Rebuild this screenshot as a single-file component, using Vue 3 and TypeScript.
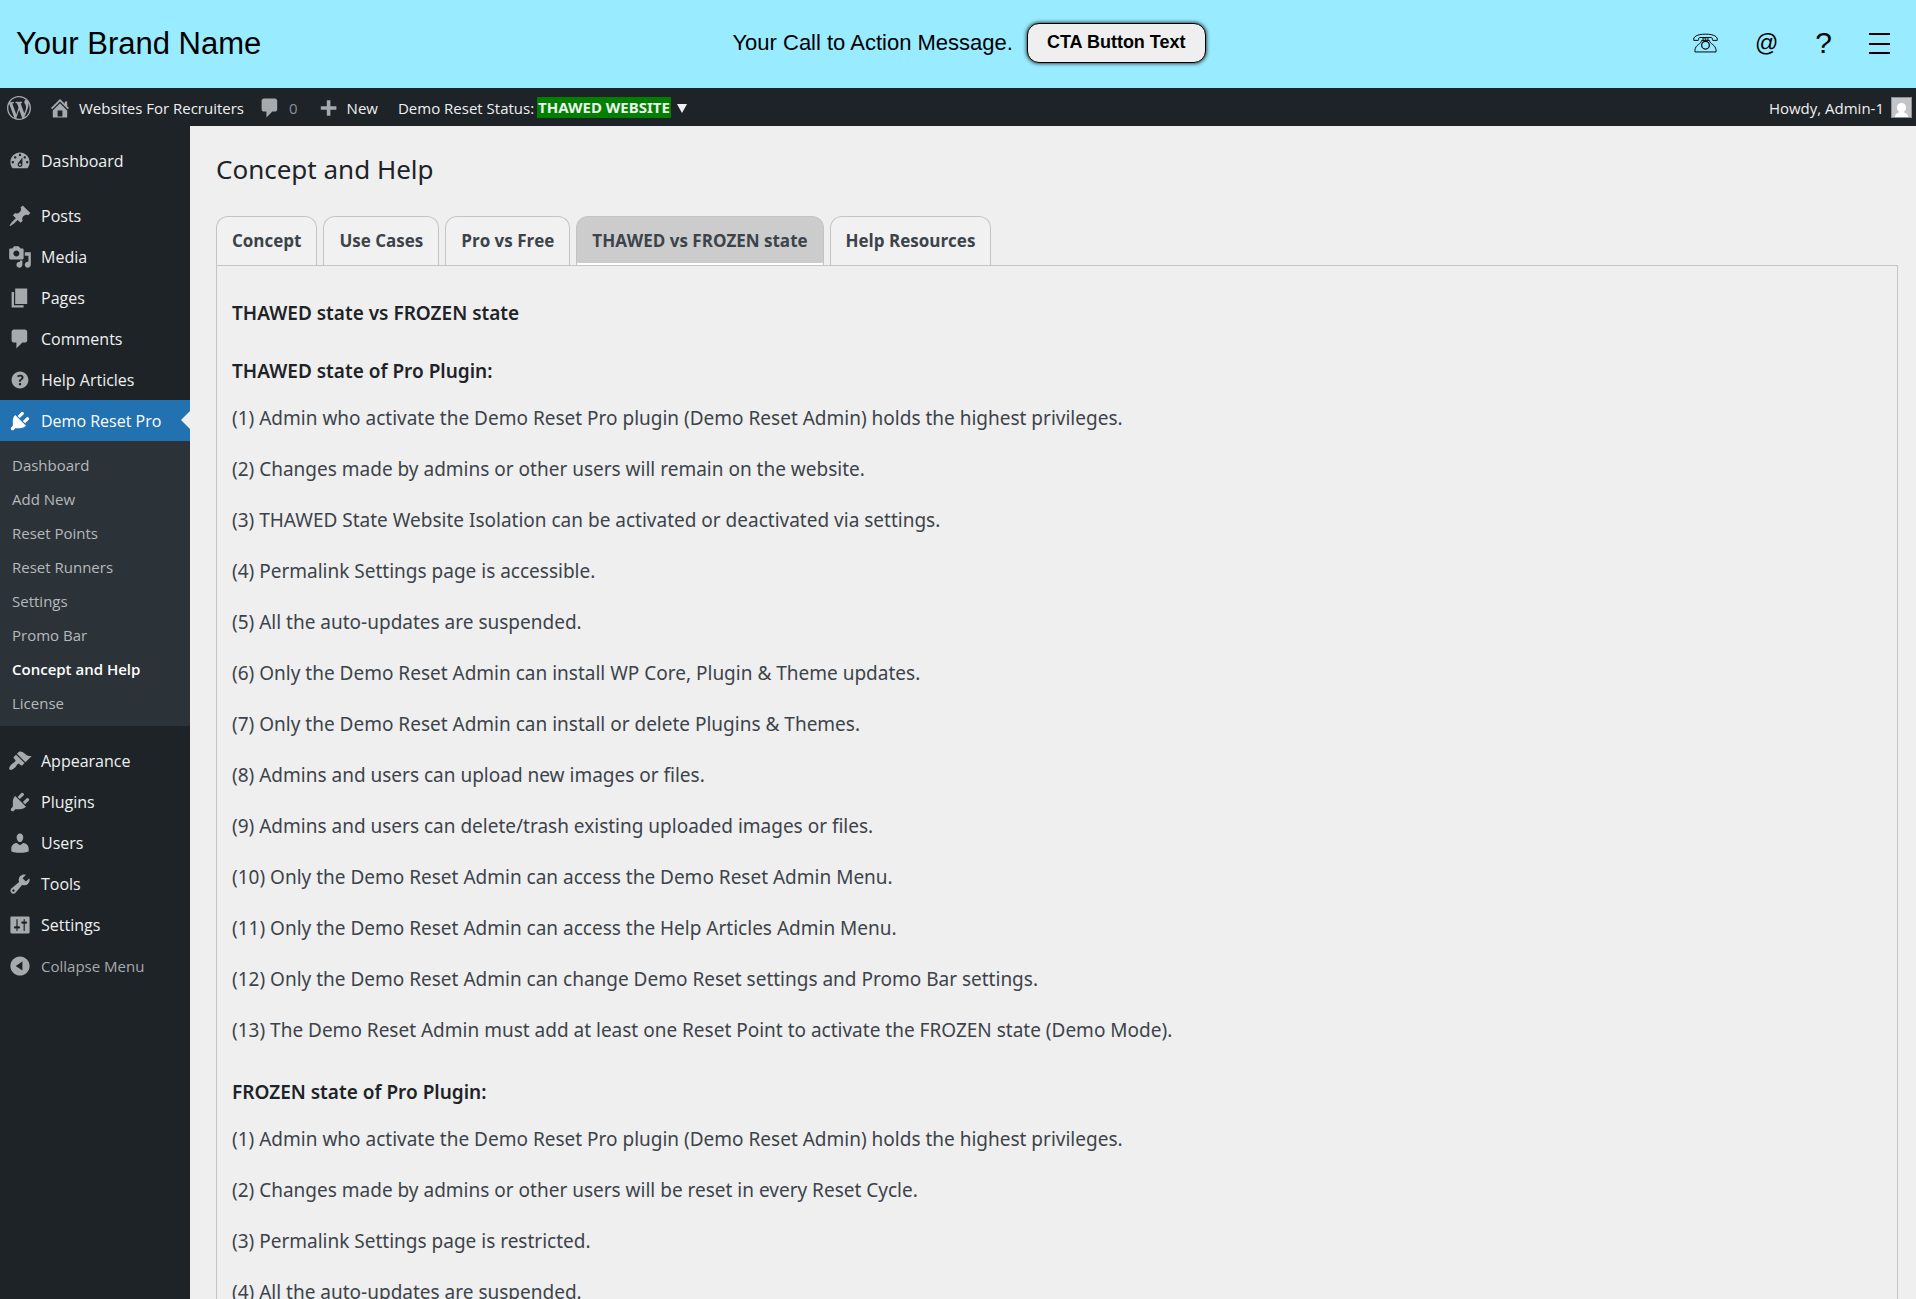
<script setup lang="ts">
import { ref } from 'vue'

interface MenuItem {
  label: string
  icon: string
  current?: boolean
  children?: string[]
}

const icons: Record<string, string> = {
  wordpress:
    'M20 10c0-5.51-4.49-10-10-10C4.48 0 0 4.49 0 10c0 5.52 4.48 10 10 10 5.51 0 10-4.48 10-10zM7.78 15.37L4.37 6.22c.55-.02 1.17-.08 1.17-.08.5-.06.44-1.13-.06-1.11 0 0-1.45.11-2.37.11-.18 0-.37 0-.58-.01C4.12 2.69 6.87 1.11 10 1.11c2.33 0 4.45.87 6.05 2.34-.68-.11-1.65.39-1.65 1.58 0 .74.45 1.36.9 2.1.35.61.55 1.36.55 2.46 0 1.49-1.4 5-1.4 5l-3.03-8.37c.54-.02.82-.17.82-.17.5-.05.44-1.25-.06-1.22 0 0-1.44.12-2.38.12-.87 0-2.33-.12-2.33-.12-.5-.03-.56 1.2-.06 1.22l.92.08 1.26 3.41zM17.41 10c.24-.64.74-1.87.43-4.25.7 1.29 1.05 2.71 1.05 4.25 0 3.29-1.73 6.24-4.4 7.78.97-2.59 1.94-5.2 2.92-7.78zM6.1 18.09C3.12 16.65 1.11 13.53 1.11 10c0-1.3.23-2.48.72-3.59C3.25 10.3 4.67 14.2 6.1 18.09zm4.03-6.63l2.58 6.98c-.86.29-1.76.45-2.71.45-.79 0-1.57-.11-2.29-.33.81-2.38 1.62-4.74 2.42-7.1z',
  home: 'M16 8.5l1.53 1.53-1.06 1.06L10 4.6l-6.47 6.49-1.06-1.06L10 2.5l4 4v-2h2v4zm-6-2.46l6 5.99V18H4v-5.97zM12 17v-5H8v5h4z',
  plus: 'M17 7v3h-5v5H9v-5H4V7h5V2h3v5h5z',
  dashboard:
    'M3.76 16h12.48c1.1-1.37 1.76-3.11 1.76-5 0-4.42-3.58-8-8-8s-8 3.58-8 8c0 1.89.66 3.63 1.76 5zM10 4c.55 0 1 .45 1 1s-.45 1-1 1-1-.45-1-1 .45-1 1-1zM6 6c.55 0 1 .45 1 1s-.45 1-1 1-1-.45-1-1 .45-1 1-1zm8 0c.55 0 1 .45 1 1s-.45 1-1 1-1-.45-1-1 .45-1 1-1zm-5.37 5.55L12 7v6c0 1.1-.9 2-2 2s-2-.9-2-2c0-.57.24-1.08.63-1.45zM4 10c.55 0 1 .45 1 1s-.45 1-1 1-1-.45-1-1 .45-1 1-1zm12 0c.55 0 1 .45 1 1s-.45 1-1 1-1-.45-1-1 .45-1 1-1zm-5 3c0-.55-.45-1-1-1s-1 .45-1 1 .45 1 1 1 1-.45 1-1z',
  post: 'M10.44 3.02l1.82-1.82 6.36 6.35-1.83 1.82c-1.05-.68-2.48-.57-3.41.36l-.75.75c-.92.93-1.04 2.35-.35 3.41l-1.83 1.82-2.41-2.41-2.8 2.79c-.42.42-3.38 2.71-3.8 2.29s1.86-3.39 2.28-3.81l2.79-2.79L4.1 9.36l1.83-1.82c1.05.69 2.48.57 3.4-.36l.75-.75c.93-.92 1.05-2.35.36-3.41z',
  media:
    'M13 11V4c0-.55-.45-1-1-1h-1.67L9 1H5L3.67 3H2c-.55 0-1 .45-1 1v7c0 .55.45 1 1 1h10c.55 0 1-.45 1-1zM7 4.5c1.38 0 2.5 1.12 2.5 2.5S8.38 9.5 7 9.5 4.5 8.38 4.5 7 5.62 4.5 7 4.5zM14 6h5v10.5c0 1.38-1.12 2.5-2.5 2.5S14 17.88 14 16.5s1.12-2.5 2.5-2.5c.17 0 .34.02.5.05V9h-3V6zm-4 8.05V13h2v3.5c0 1.38-1.12 2.5-2.5 2.5S7 17.88 7 16.5 8.12 14 9.5 14c.17 0 .34.02.5.05z',
  page: 'M6 15V2h10v13H6zm-1 1h8v2H3V5h2v11z',
  comments: 'M5 2h9c1.1 0 2 .9 2 2v7c0 1.1-.9 2-2 2h-2l-5 5v-5H5c-1.1 0-2-.9-2-2V4c0-1.1.9-2 2-2z',
  help: 'M17 10c0-3.87-3.14-7-7-7-3.87 0-7 3.13-7 7s3.13 7 7 7c3.86 0 7-3.13 7-7zm-6.3 1.48H9.14v-.43c0-.38.08-.7.24-.98s.46-.57.88-.89c.41-.29.68-.53.81-.71.14-.18.2-.39.2-.62 0-.25-.09-.44-.28-.58-.19-.13-.45-.19-.79-.19-.58 0-1.25.19-2 .57l-.64-1.28c.87-.49 1.8-.74 2.77-.74.81 0 1.45.2 1.92.58.48.39.71.91.71 1.55 0 .43-.09.8-.29 1.11-.19.32-.57.67-1.11 1.06-.38.28-.61.49-.71.63-.1.15-.15.34-.15.57v.35zm-1.47 2.74c-.18-.17-.27-.42-.27-.73 0-.33.08-.58.26-.75s.43-.25.77-.25c.32 0 .57.09.75.26s.27.42.27.74c0 .3-.09.55-.27.72-.18.18-.43.27-.75.27-.33 0-.58-.09-.76-.26z',
  plugins:
    'M13.11 4.36L9.87 7.6 8 5.73l3.24-3.24c.35-.34 1.05-.2 1.56.32.52.51.66 1.21.31 1.55zm-8 1.77l.91-1.12 9.01 9.01-1.19.84c-.71.71-2.63 1.16-3.82 1.16H6.14L4.9 17.26c-.59.59-1.54.59-2.12 0-.59-.58-.59-1.53 0-2.12l1.24-1.24v-3.88c0-1.13.4-3.19 1.09-3.89zm7.26 3.97l3.24-3.24c.34-.35 1.04-.21 1.55.31.52.51.66 1.21.31 1.55l-3.24 3.25z',
  appearance:
    'M14.48 11.06L7.41 3.99l1.5-1.5c.5-.56 2.3-.47 3.51.32 1.21.8 1.43 1.28 2.91 2.1 1.18.64 2.45 1.26 4.45.85zm-.71.71L6.7 4.7 4.93 6.47c-.39.39-.39 1.02 0 1.41l1.06 1.06c.39.39.39 1.03 0 1.42-.6.6-1.43 1.11-2.21 1.69-.35.26-.7.53-1.01.84C1.43 14.23.4 16.08 1.4 17.07c.99 1 2.84-.03 4.18-1.36.31-.31.58-.66.85-1.02.57-.78 1.08-1.61 1.69-2.21.39-.39 1.02-.39 1.41 0l1.06 1.06c.39.39 1.02.39 1.41 0z',
  users:
    'M10 9.25c-2.27 0-2.73-3.44-2.73-3.44C7 4.02 7.82 2 9.97 2c2.16 0 2.98 2.02 2.71 3.81 0 0-.41 3.44-2.68 3.44zm0 2.57L12.72 10c2.39 0 4.52 2.33 4.52 4.53v2.49s-3.65 1.13-7.24 1.13c-3.65 0-7.24-1.13-7.24-1.13v-2.49c0-2.25 1.94-4.48 4.47-4.48z',
  tools:
    'M16.68 9.77c-1.34 1.34-3.3 1.67-4.95.99l-5.41 6.52c-.99.99-2.59.99-3.58 0s-.99-2.59 0-3.57l6.52-5.42c-.68-1.65-.35-3.61.99-4.95 1.28-1.28 3.12-1.62 4.72-1.06l-2.89 2.89 2.82 2.82 2.86-2.87c.53 1.58.18 3.39-1.08 4.65zM3.81 16.21c.4.39 1.04.39 1.43 0 .4-.4.4-1.04 0-1.43-.39-.4-1.03-.4-1.43 0-.39.39-.39 1.03 0 1.43z',
  settings:
    'M18 16V4c0-.55-.45-1-1-1H3c-.55 0-1 .45-1 1v12c0 .55.45 1 1 1h14c.55 0 1-.45 1-1zM8 11h1c.55 0 1 .45 1 1s-.45 1-1 1H8v1.5c0 .28-.22.5-.5.5s-.5-.22-.5-.5V13H6c-.55 0-1-.45-1-1s.45-1 1-1h1V5.5c0-.28.22-.5.5-.5s.5.22.5.5V11zm5-2h-1c-.55 0-1-.45-1-1s.45-1 1-1h1V5.5c0-.28.22-.5.5-.5s.5.22.5.5V7h1c.55 0 1 .45 1 1s-.45 1-1 1h-1v5.5c0 .28-.22.5-.5.5s-.5-.22-.5-.5V9z',
  collapse: 'M10 2c4.42 0 8 3.58 8 8s-3.58 8-8 8-8-3.58-8-8 3.58-8 8-8zm2 4.2L6.4 10l5.6 3.8z',
}

const menuGroups: MenuItem[][] = [
  [{ label: 'Dashboard', icon: 'dashboard' }],
  [
    { label: 'Posts', icon: 'post' },
    { label: 'Media', icon: 'media' },
    { label: 'Pages', icon: 'page' },
    { label: 'Comments', icon: 'comments' },
    { label: 'Help Articles', icon: 'help' },
    {
      label: 'Demo Reset Pro',
      icon: 'plugins',
      current: true,
      children: [
        'Dashboard',
        'Add New',
        'Reset Points',
        'Reset Runners',
        'Settings',
        'Promo Bar',
        'Concept and Help',
        'License',
      ],
    },
  ],
  [
    { label: 'Appearance', icon: 'appearance' },
    { label: 'Plugins', icon: 'plugins' },
    { label: 'Users', icon: 'users' },
    { label: 'Tools', icon: 'tools' },
    { label: 'Settings', icon: 'settings' },
  ],
]

const currentPage = 'Concept and Help'

const tabs = ['Concept', 'Use Cases', 'Pro vs Free', 'THAWED vs FROZEN state', 'Help Resources']
const activeTab = ref('THAWED vs FROZEN state')

const thawed = [
  'Admin who activate the Demo Reset Pro plugin (Demo Reset Admin) holds the highest privileges.',
  'Changes made by admins or other users will remain on the website.',
  'THAWED State Website Isolation can be activated or deactivated via settings.',
  'Permalink Settings page is accessible.',
  'All the auto-updates are suspended.',
  'Only the Demo Reset Admin can install WP Core, Plugin & Theme updates.',
  'Only the Demo Reset Admin can install or delete Plugins & Themes.',
  'Admins and users can upload new images or files.',
  'Admins and users can delete/trash existing uploaded images or files.',
  'Only the Demo Reset Admin can access the Demo Reset Admin Menu.',
  'Only the Demo Reset Admin can access the Help Articles Admin Menu.',
  'Only the Demo Reset Admin can change Demo Reset settings and Promo Bar settings.',
  'The Demo Reset Admin must add at least one Reset Point to activate the FROZEN state (Demo Mode).',
]

const frozen = [
  'Admin who activate the Demo Reset Pro plugin (Demo Reset Admin) holds the highest privileges.',
  'Changes made by admins or other users will be reset in every Reset Cycle.',
  'Permalink Settings page is restricted.',
  'All the auto-updates are suspended.',
]
</script>

<template>
  <div class="page">
    <header class="promo">
      <a class="brand" href="#">Your Brand Name</a>
      <div class="cta">
        <span class="cta-message">Your Call to Action Message.</span>
        <button class="cta-button" type="button">CTA Button Text</button>
      </div>
      <nav class="promo-links" aria-label="Contact">
        <a href="#" aria-label="Phone">
          <svg class="phone" viewBox="0 0 26 20" fill="none" stroke="#000">
            <path d="M.8 7.300C0 3.500 4 .8 13 .8s13 2.700 12.200 6.500h-4.700c-.7-.8.2-2.500-1.300-3H6.800c-1.500.5-.6 2.200-1.300 3z" />
            <path d="M10.500 4.300v3.200M12.500 4.300v1.700h1.500M15.500 4.300v3.200M9 7.300h8c.5 4 6.500 4.200 7 10.200v1.800H2v-1.800C2.500 11.500 8.500 11.300 9 7.300z" />
            <circle cx="13" cy="12.300" r="4" stroke-width="1.300" />
          </svg>
        </a>
        <a class="at" href="#" aria-label="Email">@</a>
        <a class="question" href="#" aria-label="Help">?</a>
        <a href="#" aria-label="Menu">
          <svg class="bars" viewBox="0 0 21 21" fill="#000">
            <path d="M0 0h21v2H0zM0 10h21v2H0zM0 19h21v2H0z" />
          </svg>
        </a>
      </nav>
    </header>

    <nav class="admin-bar" aria-label="Toolbar">
      <a class="bar-logo" href="#" aria-label="About WordPress">
        <svg class="icon" viewBox="0 0 20 20"><path :d="icons.wordpress" /></svg>
      </a>
      <a class="bar-item site" href="#">
        <svg class="icon" viewBox="0 0 20 20"><path fill-rule="evenodd" :d="icons.home" /></svg>
        Websites For Recruiters
      </a>
      <a class="bar-item count" href="#">
        <svg class="icon" viewBox="0 0 20 20"><path :d="icons.comments" /></svg>
        0
      </a>
      <a class="bar-item new" href="#">
        <svg class="icon" viewBox="0 0 20 17"><path :d="icons.plus" /></svg>
        New
      </a>
      <a class="bar-item status" href="#">
        <span>Demo Reset Status:</span>
        <strong>THAWED WEBSITE</strong>
        <svg class="caret" viewBox="0 0 10 10"><path d="M0 0h10L5 9z" /></svg>
      </a>
      <a class="bar-item account" href="#">
        Howdy, Admin-1
        <svg class="avatar" viewBox="0 0 21 21">
          <rect width="21" height="21" fill="#8c8f94" />
          <rect x="1" y="1" width="19" height="19" fill="#c3c4c7" />
          <path d="M4 20c0-3 2.500-4.300 4.500-4.800C6.500 13.800 6 12 6 10.500 6 7.500 8 6 10.500 6S15 7.500 15 10.500c0 1.500-.5 3.300-2.500 4.700 2 .5 4.500 1.800 4.500 4.800z" fill="#fff" />
        </svg>
      </a>
    </nav>

    <div class="body">
      <nav class="sidebar" aria-label="Main menu">
        <ul v-for="(group, g) in menuGroups" :key="g" class="menu-group">
          <li v-for="item in group" :key="item.label">
            <a class="menu-link" :class="{ current: item.current }" href="#">
              <svg class="icon" viewBox="0 0 20 20"><path fill-rule="evenodd" :d="icons[item.icon]" /></svg>
              {{ item.label }}
            </a>
            <ul v-if="item.children" class="submenu">
              <li v-for="child in item.children" :key="child">
                <a href="#" :class="{ selected: child === currentPage }">{{ child }}</a>
              </li>
            </ul>
          </li>
        </ul>
        <button class="menu-link collapse" type="button">
          <svg class="icon" viewBox="0 0 20 20"><path fill-rule="evenodd" :d="icons.collapse" /></svg>
          Collapse Menu
        </button>
      </nav>

      <main class="content">
        <h1>Concept and Help</h1>
        <div class="tabs" role="tablist">
          <button
            v-for="tab in tabs"
            :key="tab"
            class="tab"
            :class="{ active: tab === activeTab }"
            type="button"
            role="tab"
            :aria-selected="tab === activeTab"
            @click="activeTab = tab"
          >
            {{ tab }}
          </button>
        </div>
        <section class="panel" role="tabpanel">
          <h2>THAWED state vs FROZEN state</h2>
          <h3>THAWED state of Pro Plugin:</h3>
          <p v-for="(line, i) in thawed" :key="line">({{ i + 1 }}) {{ line }}</p>
          <h3>FROZEN state of Pro Plugin:</h3>
          <p v-for="(line, i) in frozen" :key="line">({{ i + 1 }}) {{ line }}</p>
        </section>
      </main>
    </div>
  </div>
</template>

<style>
body {
  margin: 0;
  background: #efefef;
}
</style>

<style scoped>
.page {
  height: 100vh;
  display: flex;
  flex-direction: column;
  overflow: hidden;
  font-family: 'Open Sans', 'Noto Sans', sans-serif;
  font-size: 16px;
  color: #3c434a;
}

a {
  color: inherit;
  text-decoration: none;
}

button {
  font-family: inherit;
  cursor: pointer;
}

ul {
  list-style: none;
  margin: 0;
  padding: 0;
}

.icon {
  width: 24px;
  height: 24px;
  flex: none;
  fill: #a7aaad;
}

.promo {
  flex: none;
  display: grid;
  grid-template-columns: 1fr auto 1fr;
  align-items: center;
  height: 88px;
  padding: 0 16px;
  box-sizing: border-box;
  background: #99ebff;
  color: #000;
  font-family: 'Liberation Sans', Arial, sans-serif;
}

.brand {
  font-size: 31px;
}

.cta {
  display: flex;
  align-items: center;
  gap: 14px;
  padding: 0 0 2px 22px;
}

.cta-message {
  font-size: 22px;
}

.cta-button {
  height: 40px;
  padding: 0 19px 1px;
  border: 1px solid #000;
  border-radius: 12px;
  background: #efefef;
  box-shadow: 0 0 4px #000;
  color: #000;
  font-size: 18px;
  font-weight: 700;
}

.promo-links {
  display: flex;
  justify-content: flex-end;
  align-items: center;
  gap: 37px;
  padding: 0 10px 2px 0;
}

.promo-links a,
.bar-logo {
  display: flex;
}

.phone {
  width: 25px;
  height: 20px;
}

.bars {
  width: 21px;
  height: 21px;
}

.at {
  font-size: 23px;
}

.question {
  font-size: 30px;
}

.admin-bar {
  flex: none;
  display: flex;
  align-items: center;
  height: 38px;
  padding: 1px 4px 0 7px;
  box-sizing: border-box;
  background: #1d2327;
  color: #f0f0f1;
  font-size: 15px;
}

.bar-item {
  display: flex;
  align-items: center;
  gap: 7px;
}

.site {
  margin-left: 17px;
}

.count {
  margin-left: 14px;
  color: #8c8f94;
}

.new {
  margin-left: 18px;
}

.status {
  margin-left: 20px;
  gap: 3px;
}

.status strong {
  padding: 0 1px;
  background: #008000;
  font-family: 'Noto Sans', 'Open Sans', sans-serif;
  line-height: 21px;
}

.caret {
  width: 10px;
  height: 10px;
  margin: 2px 0 0 3px;
  fill: #f0f0f1;
}

.account {
  margin-left: auto;
}

.avatar {
  width: 21px;
  height: 21px;
}

.body {
  flex: 1;
  min-height: 0;
  display: flex;
}

.sidebar {
  flex: none;
  width: 190px;
  box-sizing: border-box;
  padding-top: 14px;
  background: #1d2327;
}

.menu-group {
  margin-bottom: 14px;
}

.menu-group:nth-of-type(3) {
  margin-bottom: 0;
}

.menu-link {
  position: relative;
  display: flex;
  align-items: center;
  gap: 9px;
  height: 41px;
  padding: 1px 0 0 8px;
  box-sizing: border-box;
  color: #f0f0f1;
  font-size: 16px;
}

.menu-link.current {
  background: #2271b1;
  color: #fff;
}

.menu-link.current .icon {
  fill: #fff;
}

.menu-link.current::after {
  content: '';
  position: absolute;
  right: 0;
  top: 11px;
  border: 9px solid transparent;
  border-left-width: 0;
  border-right-color: #efefef;
}

.submenu {
  padding: 7px 0 6px;
  background: #2c3338;
}

.submenu a {
  display: block;
  padding-left: 12px;
  color: #b6b9bc;
  font-size: 15px;
  line-height: 34px;
}

.submenu a.selected {
  color: #fff;
  font-weight: 600;
}

.menu-link.collapse {
  width: 100%;
  padding-top: 0;
  border: 0;
  background: none;
  color: #a7aaad;
  font-size: 15px;
}

.content {
  flex: 1;
  min-width: 0;
  padding: 24px 18px 0 26px;
  font-family: 'Noto Sans', 'Open Sans', sans-serif;
}

h1 {
  margin: 0 0 28px;
  color: #1d2327;
  font-size: 26px;
  font-weight: 400;
  line-height: 38px;
}

.tabs {
  display: flex;
  gap: 6px;
}

.tab {
  height: 49px;
  padding: 0 15px 2px;
  border: 1px solid #c3c4c7;
  border-bottom: 0;
  border-radius: 12px 12px 0 0;
  background: #f1f1f1;
  color: #3c434a;
  font-family: 'Open Sans', 'Noto Sans', sans-serif;
  font-size: 17px;
  font-weight: 700;
}

.tab.active {
  background: #ccc;
  box-shadow: inset 0 -2px #fff;
}

.panel {
  padding: 22px 15px;
  border: 1px solid #c3c4c7;
}

h2,
h3 {
  margin: 0;
  color: #1d2327;
  font-size: 19px;
  font-weight: 600;
}

h2 {
  line-height: 50px;
}

h3 {
  margin-top: 11px;
  line-height: 44px;
}

p {
  margin: 0;
  font-size: 19px;
  line-height: 51px;
}

p + h3 {
  margin-top: 14px;
}
</style>
